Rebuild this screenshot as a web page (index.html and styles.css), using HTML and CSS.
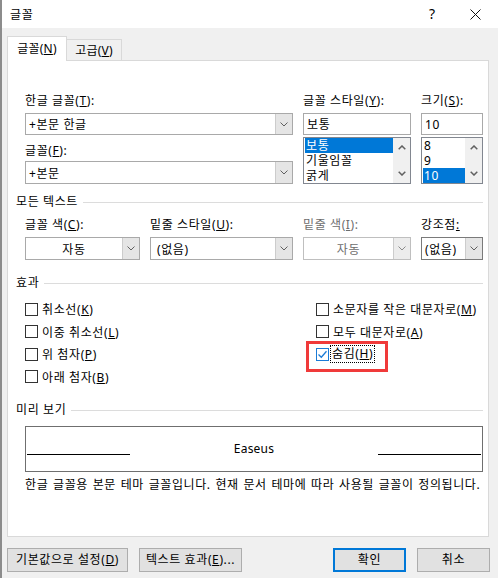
FILE: index.html
```html
<!DOCTYPE html>
<html lang="ko">
<head>
<meta charset="utf-8">
<title>글꼴</title>
<link rel="stylesheet" href="styles.css">
</head>
<body>
<div class="window">
  <header class="titlebar">
    <span class="title">글꼴</span>
    <span class="help">?</span>
    <svg class="close" width="11" height="11" viewBox="0 0 11 11"><path d="M0.5 0.5L10.5 10.5M10.5 0.5L0.5 10.5" stroke="#111" stroke-width="1" fill="none"/></svg>
  </header>

  <div class="tabs">
    <div class="tab active">글꼴(<u>N</u>)</div>
    <div class="tab">고급(<u>V</u>)</div>
  </div>

  <div class="panel">
    <div class="font-grid">
      <div class="col">
        <div class="lbl">한글 글꼴(<u>T</u>):</div>
        <div class="combo h22"><span class="val">+본문 한글</span><span class="dd"><svg width="8" height="5" viewBox="0 0 8 5"><path d="M0.5 0.5L4 4L7.5 0.5" fill="none" stroke="#606060"/></svg></span></div>
        <div class="lbl mt8">글꼴(<u>F</u>):</div>
        <div class="combo h23"><span class="val">+본문</span><span class="dd"><svg width="8" height="5" viewBox="0 0 8 5"><path d="M0.5 0.5L4 4L7.5 0.5" fill="none" stroke="#606060"/></svg></span></div>
      </div>
      <div class="col">
        <div class="lbl">글꼴 스타일(<u>Y</u>):</div>
        <div class="textbox">보통</div>
        <div class="listbox">
          <div class="items">
            <div class="item sel">보통</div>
            <div class="item">기울임꼴</div>
            <div class="item">굵게</div>
          </div>
          <div class="sb">
            <svg width="8" height="5" viewBox="0 0 8 5"><path d="M0.7 4.3L4 1L7.3 4.3" fill="none" stroke="#606060" stroke-width="1.5"/></svg>
            <svg width="8" height="5" viewBox="0 0 8 5"><path d="M0.7 0.7L4 4L7.3 0.7" fill="none" stroke="#606060" stroke-width="1.5"/></svg>
          </div>
        </div>
      </div>
      <div class="col">
        <div class="lbl">크기(<u>S</u>):</div>
        <div class="textbox">10</div>
        <div class="listbox">
          <div class="items">
            <div class="item">8</div>
            <div class="item">9</div>
            <div class="item sel">10</div>
          </div>
          <div class="sb">
            <svg width="8" height="5" viewBox="0 0 8 5"><path d="M0.7 4.3L4 1L7.3 4.3" fill="none" stroke="#606060" stroke-width="1.5"/></svg>
            <svg width="8" height="5" viewBox="0 0 8 5"><path d="M0.7 0.7L4 4L7.3 0.7" fill="none" stroke="#606060" stroke-width="1.5"/></svg>
          </div>
        </div>
      </div>
    </div>

    <div class="sec sec-all">모든 텍스트</div>
    <div class="text-grid">
      <div class="col">
        <div class="lbl">글꼴 색(<u>C</u>):</div>
        <div class="combo h23 mt4"><span class="val center">자동</span><span class="dd"><svg width="8" height="5" viewBox="0 0 8 5"><path d="M0.5 0.5L4 4L7.5 0.5" fill="none" stroke="#606060"/></svg></span></div>
      </div>
      <div class="col">
        <div class="lbl">밑줄 스타일(<u>U</u>):</div>
        <div class="combo h23 mt4"><span class="val pad6">(없음)</span><span class="dd"><svg width="8" height="5" viewBox="0 0 8 5"><path d="M0.5 0.5L4 4L7.5 0.5" fill="none" stroke="#606060"/></svg></span></div>
      </div>
      <div class="col">
        <div class="lbl disabled">밑줄 색(<u>I</u>):</div>
        <div class="combo h23 mt4 dis"><span class="val center">자동</span><span class="dd"><svg width="8" height="5" viewBox="0 0 8 5"><path d="M0.5 0.5L4 4L7.5 0.5" fill="none" stroke="#8a8a8a"/></svg></span></div>
      </div>
      <div class="col">
        <div class="lbl">강조점<u>:</u></div>
        <div class="combo h23 mt4 dark"><span class="val">(없음)</span><span class="dd"><svg width="8" height="5" viewBox="0 0 8 5"><path d="M0.5 0.5L4 4L7.5 0.5" fill="none" stroke="#606060"/></svg></span></div>
      </div>
    </div>

    <div class="sec sec-fx">효과</div>
    <div class="fx-grid">
      <div class="cb"><span class="box"></span><span>취소선(<u>K</u>)</span></div>
      <div class="cb"><span class="box"></span><span>소문자를 작은 대문자로(<u>M</u>)</span></div>
      <div class="cb"><span class="box"></span><span>이중 취소선(<u>L</u>)</span></div>
      <div class="cb"><span class="box"></span><span>모두 대문자로(<u>A</u>)</span></div>
      <div class="cb"><span class="box"></span><span>위 첨자(<u>P</u>)</span></div>
      <div class="cb marked">
        <span class="box checked"><svg width="11" height="11" viewBox="0 0 11 11"><path d="M1.5 5.5L4.3 8.3L9.5 2.3" fill="none" stroke="#1b7bd6" stroke-width="1.3"/></svg></span>
        <span class="focus">숨김(<u>H</u>)</span>
        <span class="highlight"></span>
      </div>
      <div class="cb"><span class="box"></span><span>아래 첨자(<u>B</u>)</span></div>
      <div></div>
    </div>

    <div class="sec sec-prev">미리 보기</div>
    <div class="preview">
      <span class="pline"></span>
      <span class="ptext">Easeus</span>
      <span class="pline"></span>
    </div>
    <div class="desc">한글 글꼴용 본문 테마 글꼴입니다. 현재 문서 테마에 따라 사용될 글꼴이 정의됩니다.</div>
  </div>

  <div class="btns">
    <button class="btn w121">기본값으로 설정(<u>D</u>)</button>
    <button class="btn w103 ml11">텍스트 효과(<u>E</u>)...</button>
    <span class="spacer"></span>
    <button class="btn w73 default">확인</button>
    <button class="btn w73 ml11">취소</button>
  </div>
</div>
</body>
</html>
```

FILE: styles.css
```css
* { box-sizing: border-box; }
html, body { margin: 0; padding: 0; background: #f0f0f0; }
body {
  width: 498px;
  height: 578px;
  overflow: hidden;
  font-family: "Noto Sans", "Noto Sans CJK KR", sans-serif;
  font-size: 12px;
  letter-spacing: 0.6px;
  color: #000;
}
u { text-decoration: underline; text-underline-offset: 1px; }

.window {
  width: 498px;
  height: 578px;
  border-left: 2px solid #8c8c8c;
  display: flex;
  flex-direction: column;
}

.titlebar {
  height: 28px;
  background: #fff;
  display: flex;
  align-items: center;
  padding-left: 8px;
  flex: none;
}
.title { flex: 1; font-size: 12px; }
.help { font-size: 14px; margin-right: 35px; line-height: 1; letter-spacing: 0; }
.close { margin-right: 17px; }

.tabs {
  display: flex;
  align-items: flex-end;
  padding-top: 8px;
  margin-left: 5px;
  margin-bottom: -1px;
  height: 33px;
  flex: none;
}
.tab {
  height: 22px;
  width: 55px;
  border: 1px solid #d9d9d9;
  border-left: none;
  border-bottom: none;
  background: #f0f0f0;
  display: flex;
  align-items: center;
  justify-content: center;
  line-height: 16px;
  letter-spacing: 0.2px;
}
.tab.active {
  width: 60px;
  height: 25px;
  border-left: 1px solid #d9d9d9;
  background: #fff;
  position: relative;
  z-index: 1;
  padding-bottom: 1px;
}

.panel {
  margin-left: 5px;
  width: 482px;
  height: 477px;
  background: #fff;
  border: 1px solid #d9d9d9;
  padding-top: 32px;
  flex: none;
}

.lbl { line-height: 16px; height: 16px; white-space: nowrap; }
.lbl.disabled { color: #6d6d6d; }
.mt8 { margin-top: 8px; }
.mt4 { margin-top: 4px; }

.font-grid {
  display: grid;
  grid-template-columns: 268px 108px 62px;
  column-gap: 10px;
  margin-left: 17px;
}
.font-grid .lbl + .combo,
.font-grid .lbl + .textbox { margin-top: 4px; }
.font-grid .mt8 + .combo { margin-top: 2px; }

.combo {
  display: flex;
  border: 1px solid #a9a9a9;
  background: #fff;
}
.combo.h22 { height: 22px; }
.combo.h23 { height: 23px; }
.combo.dark { border-color: #7a7a7a; }
.combo.dis { color: #6d6d6d; border-color: #bfbfbf; }
.combo .val {
  flex: 1;
  display: flex;
  align-items: center;
  padding-left: 3px;
  white-space: nowrap;
  overflow: hidden;
}
.combo .val.center { justify-content: center; padding-left: 0; }
.combo .val.pad6 { padding-left: 6px; }
.combo .dd {
  width: 17px;
  background: #e5e5e5;
  border-left: 1px solid #cccccc;
  display: flex;
  align-items: center;
  justify-content: center;
}
.combo.dis .dd { background: #ececec; }

.textbox {
  height: 22px;
  border: 1px solid #a9a9a9;
  display: flex;
  align-items: center;
  padding-left: 3px;
}
.listbox {
  margin-top: 2px;
  height: 47px;
  border: 1px solid #828790;
  display: flex;
  overflow: hidden;
}
.listbox .items { flex: 1; padding-left: 1px; }
.listbox .item {
  height: 15px;
  line-height: 15px;
  padding-left: 1px;
  white-space: nowrap;
  overflow: hidden;
}
.listbox .item.sel { background: #0078d7; color: #fff; }
.listbox .sb {
  width: 17px;
  background: #f0f0f0;
  display: flex;
  flex-direction: column;
  justify-content: space-between;
  align-items: center;
  padding: 7px 0 7px;
}

.sec {
  display: flex;
  align-items: center;
  height: 16px;
  line-height: 16px;
  margin-left: 8px;
  margin-right: 5px;
  white-space: nowrap;
}
.sec::after {
  content: "";
  flex: 1;
  height: 1px;
  background: #dcdcdc;
  margin-left: 5px;
}
.sec-all { margin-top: 10px; }
.sec-fx { margin-top: 15px; }
.sec-prev { margin-top: 14px; }

.text-grid {
  display: grid;
  grid-template-columns: 115px 143px 108px 62px;
  column-gap: 10px;
  margin-left: 17px;
  margin-top: 7px;
}

.fx-grid {
  display: grid;
  grid-template-columns: 291px 1fr;
  grid-auto-rows: 22.5px;
  margin-left: 17px;
  margin-top: 7px;
}
.cb {
  display: flex;
  align-items: center;
  gap: 4px;
  white-space: nowrap;
  position: relative;
}
.box {
  width: 13px;
  height: 13px;
  border: 1px solid #333;
  background: #fff;
  flex: none;
  display: flex;
  align-items: center;
  justify-content: center;
}
.box.checked { border-color: #1b7bd6; }
.focus {
  outline: 1px dotted #000;
  outline-offset: 0;
  padding: 0 1px;
  margin-left: -2px;
  line-height: 16px;
}
.highlight {
  position: absolute;
  left: -10px;
  top: -2px;
  width: 82px;
  height: 31px;
  border: 3px solid #f03a3a;
  pointer-events: none;
}

.preview {
  margin: 8px 5px 0 17px;
  height: 46px;
  border: 1px solid #6f6f6f;
  display: flex;
  align-items: center;
  padding: 0 1px;
}
.pline {
  width: 103px;
  height: 1px;
  background: #000;
  margin-top: 10px;
}
.ptext { flex: 1; text-align: center; line-height: 16px; letter-spacing: 0.2px; }

.desc {
  margin-left: 17px;
  margin-top: 5px;
  line-height: 16px;
  white-space: nowrap;
  word-spacing: 1px;
}

.btns {
  display: flex;
  margin-top: 11px;
  padding-left: 5px;
  padding-right: 8px;
  height: 24px;
}
.btn {
  height: 24px;
  background: #e1e1e1;
  border: 1px solid #adadad;
  font: inherit;
  letter-spacing: 0.6px;
  color: #000;
  padding: 0;
  line-height: 16px;
  white-space: nowrap;
}
.btn.default { border: 2px solid #0078d7; }
.w121 { width: 121px; }
.w103 { width: 103px; }
.w73 { width: 73px; }
.ml11 { margin-left: 11px; }
.spacer { flex: 1; }
```
